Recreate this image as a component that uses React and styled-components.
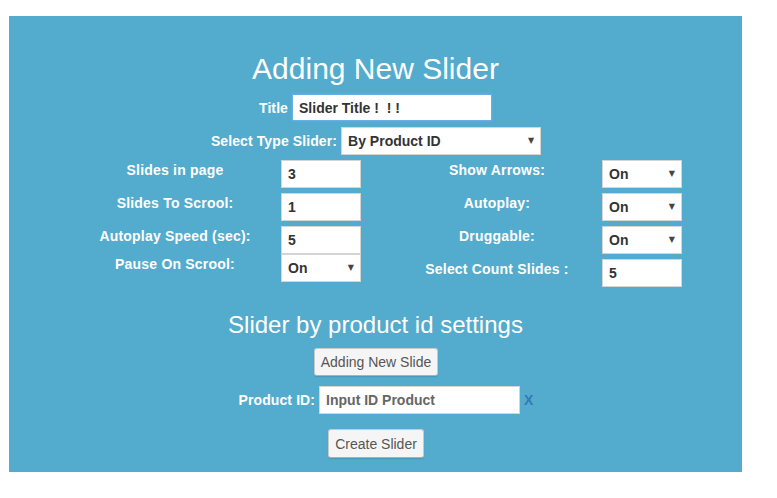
import React from 'react'
import styled, { createGlobalStyle, css } from 'styled-components'

const leftSettings = [
  { label: 'Slides in page', value: '3' },
  { label: 'Slides To Scrool:', value: '1' },
  { label: 'Autoplay Speed (sec):', value: '5', tight: true },
  { label: 'Pause On Scrool:', select: 'On' }
]

const rightSettings = [
  { label: 'Show Arrows:', select: 'On' },
  { label: 'Autoplay:', select: 'On' },
  { label: 'Druggable:', select: 'On' },
  { label: 'Select Count Slides :', value: '5' }
]

function SettingsColumn ({ items, gap }) {
  return (
    <Column>
      {items.map(item => (
        <SettingRow key={item.label} $gap={gap} $tight={item.tight}>
          <SettingLabel>{item.label}</SettingLabel>
          {item.select ? (
            <SelectWrap $w={80}>
              <Select defaultValue={item.select}>
                <option>On</option>
                <option>Off</option>
              </Select>
            </SelectWrap>
          ) : (
            <Field $w={80} defaultValue={item.value} />
          )}
        </SettingRow>
      ))}
    </Column>
  )
}

function App () {
  return (
    <>
      <GlobalStyle />
      <Panel>
        <Heading>Adding New Slider</Heading>
        {/** title */}
        <InlineRow $top={9}>
          <Label>Title</Label>
          <Field $w={200} $h={27} $focus defaultValue='Slider Title !  ! !' />
        </InlineRow>
        {/** slider type */}
        <InlineRow $top={6} $shift={1}>
          <Label>Select Type Slider:</Label>
          <SelectWrap $w={200}>
            <Select defaultValue='By Product ID'>
              <option>By Product ID</option>
              <option>By Category</option>
            </Select>
          </SelectWrap>
        </InlineRow>
        {/** settings grid */}
        <Settings>
          <SettingsColumn items={leftSettings} gap={9} />
          <SettingsColumn items={rightSettings} gap={8} />
        </Settings>
        <SubHeading>Slider by product id settings</SubHeading>
        <Centered $top={10}>
          <Button>Adding New Slide</Button>
        </Centered>
        <InlineRow $top={10} $shift={21}>
          <Label>Product ID:</Label>
          <Field $w={201} placeholder='Input ID Product' />
          <Remove>X</Remove>
        </InlineRow>
        <Centered $top={15}>
          <Button $h={29}>Create Slider</Button>
        </Centered>
      </Panel>
    </>
  )
}

export default App

const GlobalStyle = createGlobalStyle`
  body {
    margin: 0;
    background: #fff;
    font-family: "Liberation Sans", Arial, sans-serif;
  }
`

const Panel = styled.div`
  margin: 16px 0 0 9px;
  width: 733px;
  box-sizing: border-box;
  padding: 36px 0 14px;
  background-color: #53abcd;
  color: #fff;
`

const Heading = styled.h1`
  margin: 0;
  font-size: 30px;
  font-weight: normal;
  line-height: 33px;
  text-align: center;
`

const SubHeading = styled.h2`
  margin: 25px 0 0;
  font-size: 24px;
  font-weight: normal;
  line-height: 26px;
  text-align: center;
`

const InlineRow = styled.div`
  display: flex;
  justify-content: center;
  align-items: center;
  gap: 4px;
  margin-top: ${p => p.$top}px;
  padding-left: ${p => p.$shift || 0}px;
`

const Centered = styled.div`
  display: flex;
  justify-content: center;
  margin-top: ${p => p.$top}px;
  padding-left: 1px;
`

const Label = styled.label`
  font-size: 14px;
  font-weight: bold;
  line-height: 20px;
  letter-spacing: 0.1px;
`

const Settings = styled.div`
  display: flex;
  gap: 39px;
  margin: 5px 0 0 69px;
  align-items: flex-start;
`

const Column = styled.div`
  display: flex;
  flex-direction: column;
`

const SettingRow = styled.div`
  display: grid;
  grid-template-columns: 194px 80px;
  column-gap: ${p => p.$gap}px;
  align-items: start;
  margin-bottom: ${p => (p.$tight ? 0 : 5)}px;
  &:last-child {
    margin-bottom: 0;
  }
`

const SettingLabel = styled.div`
  font-size: 14px;
  font-weight: bold;
  line-height: 20px;
  letter-spacing: 0.2px;
  text-align: center;
`

const fieldBase = css`
  box-sizing: border-box;
  margin: 0;
  border: 1px solid #d4d4d4;
  padding: 0 6px;
  background: #fff;
  font-family: "Liberation Sans", Arial, sans-serif;
  font-size: 14px;
  font-weight: bold;
  color: #333;
  outline: none;
`

const Field = styled.input`
  ${fieldBase}
  width: ${p => p.$w}px;
  height: ${p => p.$h || 28}px;
  ${p =>
    p.$focus &&
    css`
      border-color: #66afe9;
      box-shadow: 0 0 3px rgba(102, 175, 233, 0.7);
    `}
  &::placeholder {
    color: #666;
    opacity: 1;
  }
`

const SelectWrap = styled.div`
  position: relative;
  width: ${p => p.$w}px;
  height: 28px;
  &::after {
    content: '\\25BC';
    position: absolute;
    right: 7px;
    top: 9px;
    font-family: "DejaVu Sans", sans-serif;
    font-size: 8px;
    line-height: 10px;
    color: #444;
    pointer-events: none;
  }
`

const Select = styled.select`
  ${fieldBase}
  appearance: none;
  width: 100%;
  height: 100%;
  padding-left: 6px;
  border-radius: 0;
`

const Button = styled.button`
  height: ${p => p.$h || 28}px;
  padding: 0 6px;
  border: 1px solid #c9c9c9;
  border-bottom-color: #b0b0b0;
  border-radius: 3px;
  background: #f5f5f5;
  box-shadow: 0 1px 1px rgba(0, 0, 0, 0.12);
  font-family: "Liberation Sans", Arial, sans-serif;
  font-size: 14px;
  color: #555;
  cursor: pointer;
`

const Remove = styled.span`
  font-size: 14px;
  font-weight: bold;
  color: #337ab7;
  cursor: pointer;
`
